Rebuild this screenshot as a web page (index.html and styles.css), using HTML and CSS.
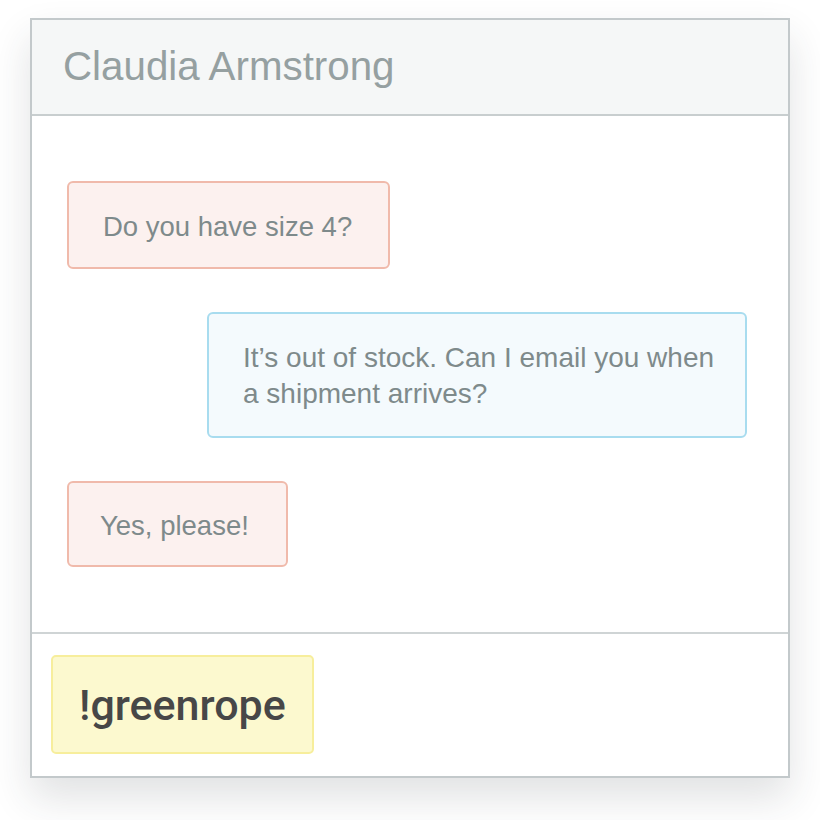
FILE: index.html
```html
<!DOCTYPE html>
<html>
<head>
<meta charset="utf-8">
<link rel="stylesheet" href="styles.css">
</head>
<body>
<div class="chat">
  <div class="chat-header">Claudia Armstrong</div>
  <div class="chat-messages">
    <div class="bubble bubble-in">Do you have size 4?</div>
    <div class="bubble bubble-out">It’s out of stock. Can I email you when a shipment arrives?</div>
    <div class="bubble bubble-in bubble-short">Yes, please!</div>
  </div>
  <div class="chat-footer">
    <div class="tag">!greenrope</div>
  </div>
</div>
</body>
</html>
```

FILE: styles.css
```css
html, body {
  margin: 0;
  padding: 0;
  background: #ffffff;
}

body {
  padding: 18px 30px 42px;
  font-family: "Liberation Sans", Arial, Helvetica, sans-serif;
}

.chat {
  box-sizing: border-box;
  width: 760px;
  height: 760px;
  border: 2px solid #c3c9cb;
  background: #ffffff;
  display: flex;
  flex-direction: column;
  box-shadow: 0 20px 38px rgba(40, 50, 60, 0.14);
}

.chat-header {
  height: 94px;
  display: flex;
  align-items: center;
  padding-left: 31px;
  background: #f5f7f7;
  border-bottom: 2px solid #c8cecf;
  color: #95a0a1;
  font-size: 40.3px;
}

.chat-messages {
  height: 518px;
  box-sizing: border-box;
  padding: 65px 41px 0 35px;
  display: flex;
  flex-direction: column;
  align-items: flex-start;
  gap: 43px;
  border-bottom: 2px solid #cfd4d5;
}

.bubble {
  box-sizing: border-box;
  border: 2px solid;
  border-radius: 6px;
  padding: 26px 28px 22px 34px;
  font-size: 27.5px;
  line-height: 36px;
  color: #7e8a8b;
}

.bubble-in {
  background: #fcf1ef;
  border-color: #f0baab;
  padding-right: 36px;
}

.bubble-short {
  padding: 25px 37px 21px 31px;
}

.bubble-out {
  align-self: flex-end;
  width: 540px;
  padding-right: 22px;
  padding-bottom: 24px;
  font-size: 28px;
  background: #f4fafd;
  border-color: #a8dcef;
}

.chat-footer {
  flex: 1;
  padding: 21px 19px;
  display: flex;
  align-items: flex-start;
}

.tag {
  box-sizing: border-box;
  height: 99px;
  display: flex;
  align-items: center;
  padding: 0 26px;
  background: #fcf9cf;
  border: 2px solid #f7ee9c;
  border-radius: 5px;
  color: #474747;
  font-family: Roboto, "Liberation Sans", sans-serif;
  font-size: 43px;
  font-weight: 500;
}
```
